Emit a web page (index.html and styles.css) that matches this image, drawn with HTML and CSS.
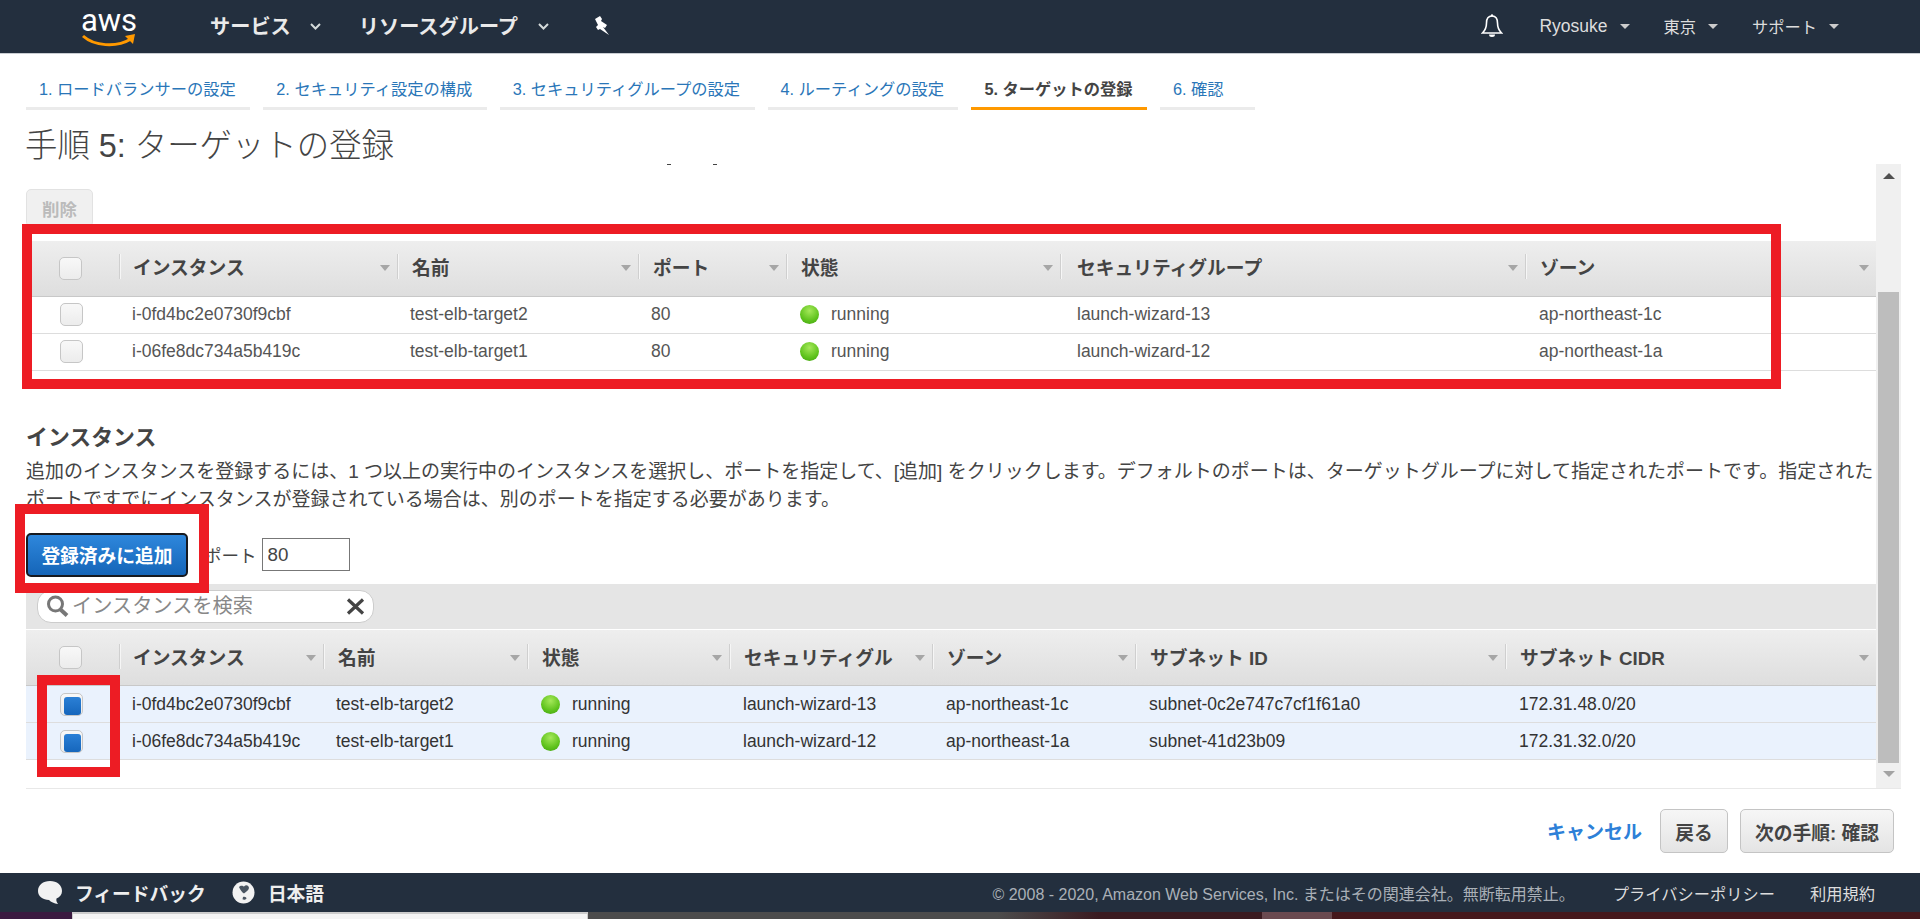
FILE: index.html
```html
<!DOCTYPE html>
<html lang="ja">
<head>
<meta charset="utf-8">
<title>手順 5: ターゲットの登録</title>
<link rel="stylesheet" href="styles.css">
</head>
<body>
<div class="page">
  <header class="topnav">
    <div class="logo">
      <span class="logo-text">aws</span>
      <svg class="logo-smile" width="54" height="14" viewBox="0 0 54 14"><path d="M1 3C12 13 34 15 49 6" fill="none" stroke="#f90" stroke-width="3"/><path d="M43 3L53 1L51 11Z" fill="#f90"/></svg>
    </div>
    <nav class="nav-left">
      <a class="nav-main nav-services">サービス</a>
      <svg class="chev" width="11" height="7" viewBox="0 0 11 7"><path d="M1 1L5.5 5.5L10 1" fill="none" stroke="#d5dbdb" stroke-width="2"/></svg>
      <a class="nav-main nav-groups">リソースグループ</a>
      <svg class="chev" width="11" height="7" viewBox="0 0 11 7"><path d="M1 1L5.5 5.5L10 1" fill="none" stroke="#d5dbdb" stroke-width="2"/></svg>
      <svg class="pin" width="18" height="20" viewBox="0 0 18 20"><path d="M2 3L7 0L9 3L8 5L14 9L12 12L10 11L16 19L7 13L5 14L3 11L5 9L2 3Z" fill="#fff"/></svg>
    </nav>
    <nav class="nav-right">
      <svg class="bell" width="22" height="24" viewBox="0 0 22 24"><path d="M11 2C7 2 5.500 5 5.500 9C5.500 13 4.500 16 1.500 19H20.500C17.500 16 16.500 13 16.500 9C16.500 5 15 2 11 2Z" fill="none" stroke="#fff" stroke-width="1.600"/><path d="M8 20.500A3 2.500 0 0 0 14 20.500Z" fill="#fff"/><circle cx="11" cy="1.500" r="1.200" fill="#fff"/></svg>
      <a class="nav-sub nav-user">Ryosuke</a><span class="caret caret-wide"></span>
      <a class="nav-sub nav-region">東京</a><span class="caret caret-wide"></span>
      <a class="nav-sub nav-support">サポート</a><span class="caret"></span>
    </nav>
  </header>

  <ul class="tabs">
    <li class="tab">1. ロードバランサーの設定</li>
    <li class="tab">2. セキュリティ設定の構成</li>
    <li class="tab">3. セキュリティグループの設定</li>
    <li class="tab">4. ルーティングの設定</li>
    <li class="tab tab-active">5. ターゲットの登録</li>
    <li class="tab tab-last">6. 確認</li>
  </ul>

  <h1 class="title">手順 5: ターゲットの登録</h1>

  <div class="scroller">
    <main class="content">
      <span class="clip-mark"></span>
      <button class="btn btn-disabled">削除</button>

      <table class="grid grid-a">
        <colgroup><col class="a0"><col class="a1"><col class="a2"><col class="a3"><col class="a4"><col class="a5"><col></colgroup>
        <thead>
          <tr>
            <th class="check-cell"><span class="box"></span></th>
            <th><div class="hc">インスタンス<i class="sort"></i></div></th>
            <th><div class="hc">名前<i class="sort"></i></div></th>
            <th><div class="hc">ポート<i class="sort"></i></div></th>
            <th><div class="hc">状態<i class="sort"></i></div></th>
            <th><div class="hc">セキュリティグループ<i class="sort"></i></div></th>
            <th><div class="hc">ゾーン<i class="sort"></i></div></th>
          </tr>
        </thead>
        <tbody>
          <tr>
            <td class="check-cell"><span class="box"></span></td>
            <td>i-0fd4bc2e0730f9cbf</td><td>test-elb-target2</td><td>80</td>
            <td><span class="status"><i class="dot"></i>running</span></td>
            <td>launch-wizard-13</td><td>ap-northeast-1c</td>
          </tr>
          <tr>
            <td class="check-cell"><span class="box"></span></td>
            <td>i-06fe8dc734a5b419c</td><td>test-elb-target1</td><td>80</td>
            <td><span class="status"><i class="dot"></i>running</span></td>
            <td>launch-wizard-12</td><td>ap-northeast-1a</td>
          </tr>
        </tbody>
      </table>

      <h2 class="section-title">インスタンス</h2>
      <p class="section-text">追加のインスタンスを登録するには、1 つ以上の実行中のインスタンスを選択し、ポートを指定して、[追加] をクリックします。デフォルトのポートは、ターゲットグループに対して指定されたポートです。指定された<br>ポートですでにインスタンスが登録されている場合は、別のポートを指定する必要があります。</p>

      <div class="add-row">
        <button class="btn-primary">登録済みに追加</button>
        <label class="port-label">ポート</label>
        <input class="port-input" type="text" value="80">
      </div>

      <div class="filter-bar">
        <div class="search">
          <svg class="search-icon" width="24" height="22" viewBox="0 0 24 22"><circle cx="9.500" cy="9" r="7" fill="none" stroke="#777" stroke-width="3"/><path d="M14.500 14.500L21 20.500" stroke="#777" stroke-width="4"/></svg>
          <span class="search-ph">インスタンスを検索</span>
          <svg class="search-x" width="19" height="17" viewBox="0 0 19 17"><path d="M2 1.500L17 15.500M17 1.500L2 15.500" stroke="#444" stroke-width="3.200"/></svg>
        </div>
      </div>

      <table class="grid grid-b">
        <colgroup><col class="b0"><col class="b1"><col class="b2"><col class="b3"><col class="b4"><col class="b5"><col class="b6"><col></colgroup>
        <thead>
          <tr>
            <th class="check-cell"><span class="box"></span></th>
            <th><div class="hc">インスタンス<i class="sort"></i></div></th>
            <th><div class="hc">名前<i class="sort"></i></div></th>
            <th><div class="hc">状態<i class="sort"></i></div></th>
            <th><div class="hc">セキュリティグル<i class="sort"></i></div></th>
            <th><div class="hc">ゾーン<i class="sort"></i></div></th>
            <th><div class="hc">サブネット ID<i class="sort"></i></div></th>
            <th><div class="hc">サブネット CIDR<i class="sort"></i></div></th>
          </tr>
        </thead>
        <tbody>
          <tr class="selected">
            <td class="check-cell"><span class="box box-on"></span></td>
            <td>i-0fd4bc2e0730f9cbf</td><td>test-elb-target2</td>
            <td><span class="status"><i class="dot"></i>running</span></td>
            <td>launch-wizard-13</td><td>ap-northeast-1c</td><td>subnet-0c2e747c7cf1f61a0</td><td>172.31.48.0/20</td>
          </tr>
          <tr class="selected">
            <td class="check-cell"><span class="box box-on"></span></td>
            <td>i-06fe8dc734a5b419c</td><td>test-elb-target1</td>
            <td><span class="status"><i class="dot"></i>running</span></td>
            <td>launch-wizard-12</td><td>ap-northeast-1a</td><td>subnet-41d23b09</td><td>172.31.32.0/20</td>
          </tr>
        </tbody>
      </table>
    </main>
    <div class="scrollbar">
      <span class="sb-up"></span>
      <span class="sb-thumb"></span>
      <span class="sb-down"></span>
    </div>
  </div>

  <div class="actions">
    <a class="cancel">キャンセル</a>
    <button class="btn btn-back">戻る</button>
    <button class="btn btn-next">次の手順: 確認</button>
  </div>

  <footer class="footer">
    <svg class="foot-icon" width="24" height="23" viewBox="0 0 24 23"><path d="M12 0C5 0 0 4 0 10C0 15.500 5 19 11 19C13 21 16 22.500 20 23C18.500 21 18 19.500 18.500 17.500C22 16 24 13.500 24 10C24 4 19 0 12 0Z" fill="#f2f2f2"/></svg>
    <span class="foot-strong foot-feedback">フィードバック</span>
    <svg class="foot-icon" width="23" height="23" viewBox="0 0 23 23"><circle cx="11.500" cy="11.500" r="11" fill="#f2f2f2"/><path d="M7 6C9 3.500 12 5.500 12 5.500C14 3.500 16.500 4 17 7C16.500 9.500 14 10.500 12 12.500C10 11.500 8.500 9 7 6ZM11 16C12.500 15.200 14.500 16 14.500 17.500C13.500 19 11.500 19 10.500 18.300Z" fill="#4a5561"/></svg>
    <span class="foot-strong foot-lang">日本語</span>
    <span class="foot-copy">© 2008 - 2020, Amazon Web Services, Inc. またはその関連会社。無断転用禁止。</span>
    <a class="foot-link foot-privacy">プライバシーポリシー</a>
    <a class="foot-link foot-terms">利用規約</a>
  </footer>

  <div class="desktop">
    <span class="d-purple"></span>
    <span class="d-window"></span>
    <span class="d-grey"></span>
    <span class="d-maroon"></span>
    <span class="d-pale"></span>
    <span class="d-red"></span>
  </div>

  <span class="mark mark-table"></span>
  <span class="mark mark-button"></span>
  <span class="mark mark-checks"></span>
</div>
</body>
</html>
```

FILE: styles.css
```css
* { box-sizing: border-box; }
html, body { margin: 0; padding: 0; }
body {
  background: #fff;
  color: #444;
  font-family: "Liberation Sans", "Noto Sans CJK JP", sans-serif;
  font-size: 17.5px;
}
.page {
  position: relative;
  width: 1920px;
  height: 919px;
  overflow: hidden;
  display: flex;
  flex-direction: column;
}

/* top nav */
.topnav {
  flex: none;
  height: 54px;
  background: #232f3e;
  border-bottom: 1px solid #c9cdd2;
  display: flex;
  align-items: center;
  padding-left: 82px;
  color: #fff;
}
.logo {
  width: 54px;
  height: 44px;
  display: flex;
  flex-direction: column;
  align-items: center;
}
.logo-text {
  font-family: Roboto, sans-serif;
  font-size: 31px;
  line-height: 36px;
  height: 36px;
  margin-top: -2px;
  color: #fff;
}
.logo-smile { margin-top: -6px; }
.nav-left { display: flex; align-items: center; margin-left: 74px; }
.nav-main { font-size: 20.200px; font-weight: 700; color: #eaeaea; margin-top: -3px; }
.chev { margin-left: 19px; margin-right: 38px; flex: none; }
.nav-groups + .chev { margin-left: 20px; margin-right: 44px; }
.pin { flex: none; margin-top: -2px; }
.nav-right { margin-left: auto; display: flex; align-items: center; padding-right: 81px; }
.bell { margin-right: 36px; margin-top: -2px; }
.nav-sub { font-size: 16.250px; color: #ddd; margin-top: -1px; }
.nav-user { font-size: 17.500px; }
.caret {
  width: 0; height: 0;
  margin-left: 12px;
  border-left: 5px solid transparent;
  border-right: 5px solid transparent;
  border-top: 5px solid #ccc;
}
.caret-wide { margin-right: 34px; }

/* tabs */
.tabs {
  flex: none;
  list-style: none;
  margin: 18px 0 0;
  padding: 0 0 0 26px;
  display: flex;
  gap: 13px;
}
.tab {
  height: 38px;
  padding: 0 14.500px 0 13px;
  line-height: 34px;
  font-size: 16.250px;
  color: #2a76b8;
  border-bottom: 3px solid #ebebeb;
  white-space: nowrap;
}
.tab-active { color: #444; font-weight: 700; border-bottom-color: #f90; }
.tab-last { width: 95px; }

.title {
  flex: none;
  height: 54px;
  margin: 0;
  padding-left: 25px;
  font-size: 32.400px;
  line-height: 72px;
  font-weight: 300;
  color: #444;
}

/* scroll region */
.scroller {
  flex: none;
  height: 625px;
  margin-left: 26px;
  width: 1875px;
  display: flex;
  border-bottom: 1px solid #e8e8e8;
  overflow: hidden;
}
.content { position: relative; width: 1850px; flex: none; }
.clip-mark {
  position: absolute;
  left: 641px;
  top: 0;
  width: 4px;
  height: 1px;
  background: #444;
}
.clip-mark::after {
  content: "";
  position: absolute;
  left: 46px;
  top: 0;
  width: 4px;
  height: 1px;
  background: #444;
}
.scrollbar {
  flex: 1;
  background: #f0f0f0;
  display: flex;
  flex-direction: column;
  align-items: center;
  padding-top: 9px;
}
.sb-up {
  width: 0; height: 0;
  border-left: 6px solid transparent;
  border-right: 6px solid transparent;
  border-bottom: 6px solid #505050;
}
.sb-thumb { width: 21px; height: 471px; margin-top: 113px; background: #bdbdbd; }
.sb-down {
  width: 0; height: 0;
  margin-top: 8px;
  border-left: 6px solid transparent;
  border-right: 6px solid transparent;
  border-top: 6px solid #a3a3a3;
}

.btn {
  font: inherit;
  font-weight: 700;
  color: #444;
  background: linear-gradient(#f6f6f6, #e4e4e4);
  border: 1px solid #c4c4c4;
  border-radius: 5px;
  padding: 0;
}
.btn-disabled {
  display: block;
  margin: 25px 0 0;
  width: 67px;
  height: 38px;
  color: #bbb;
  background: #f0f0f0;
  border-color: #e2e2e2;
  font-size: 17.500px;
}

/* tables */
.grid {
  width: 100%;
  table-layout: fixed;
  border-collapse: collapse;
}
.grid-a { margin-top: 14px; }
.a0, .b0 { width: 93px; }
.a1 { width: 278px; }
.a2 { width: 241px; }
.a3 { width: 148px; }
.a4 { width: 274px; }
.a5 { width: 465px; }
.b1 { width: 204px; }
.b2 { width: 204px; }
.b3 { width: 202px; }
.b4 { width: 203px; }
.b5 { width: 203px; }
.b6 { width: 370px; }
.grid th {
  height: 55px;
  padding: 0;
  background: linear-gradient(#eeeeee, #dedede);
  border-bottom: 1px solid #c8c8c8;
  text-align: left;
  font-size: 18.750px;
  font-weight: 700;
  color: #444;
}
.grid-b th { height: 56px; }
.hc {
  height: 25px;
  margin-top: -2px;
  display: flex;
  align-items: center;
  justify-content: space-between;
  border-left: 1px solid #cfcfcf;
  box-shadow: inset 1px 0 0 #f6f6f6;
  padding: 0 7px 0 14px;
  white-space: nowrap;
}
.grid-a .hc { margin-top: -3px; }
.grid th:nth-child(2) .hc { padding-left: 13px; }
.grid-a th:nth-child(6) .hc { padding-left: 16px; }
.sort {
  flex: none;
  width: 0; height: 0;
  margin-top: 3px;
  border-left: 5px solid transparent;
  border-right: 5px solid transparent;
  border-top: 6px solid #a6a6a6;
}
.grid td {
  height: 37px;
  padding: 0 0 0 13px;
  border-bottom: 1px solid #ddd;
  font-size: 17.500px;
  color: #555;
  white-space: nowrap;
}
.grid-a td:nth-child(6) { padding-left: 17px; }
.grid-a td:nth-child(7),
.grid-b td:nth-child(n+5) { padding-left: 14px; }
.grid .check-cell { padding: 0 0 0 33px; }
.box {
  display: block;
  width: 23px;
  height: 23px;
  background: linear-gradient(#f8f8f8, #ececec);
  border: 1px solid #c6c6c6;
  border-radius: 5px;
  position: relative;
}
.grid td .box { margin-left: 1px; }
.box-on::after {
  content: "";
  position: absolute;
  left: 3px;
  top: 3px;
  width: 17px;
  height: 18px;
  border-radius: 3px;
  background: linear-gradient(#2b80d6, #1666bc);
}
.selected td { background: #eaf2fd; color: #333; }
.status { display: flex; align-items: center; gap: 12px; }
.dot {
  width: 19px;
  height: 19px;
  margin-left: 1px;
  flex: none;
  border-radius: 50%;
  background: radial-gradient(circle at 50% 30%, #a5e85a, #5fc31d 60%, #3f9f10);
}

/* instances section */
.section-title {
  margin: 53px 0 0;
  font-size: 21.900px;
  line-height: 28px;
  font-weight: 700;
  color: #444;
}
.section-text {
  margin: 6px 0 0;
  font-size: 19px;
  line-height: 28px;
  color: #444;
  white-space: nowrap;
}
.add-row {
  margin-top: 19px;
  height: 44px;
  display: flex;
  align-items: center;
}
.btn-primary {
  width: 162px;
  height: 44px;
  font: inherit;
  font-size: 18.750px;
  font-weight: 700;
  color: #fff;
  background: linear-gradient(#2e87dc, #1565b8);
  border: 2px solid #16191f;
  border-radius: 5px;
  padding: 0;
}
.port-label { margin-left: 16px; font-size: 17.500px; color: #444; }
.port-input {
  width: 88px;
  height: 33px;
  margin-left: 5px;
  padding: 0 5px;
  font: inherit;
  font-size: 18.750px;
  color: #444;
  background: #fff;
  border: 1px solid #777;
  border-radius: 0;
}
.filter-bar {
  margin-top: 7px;
  height: 46px;
  background: #e5e5e5;
  border-bottom: 1px solid #fff;
  padding: 6px 0 0 11px;
}
.search {
  width: 337px;
  height: 33px;
  background: #fff;
  border: 1px solid #ccc;
  border-radius: 14px;
  display: flex;
  align-items: center;
  padding: 0 8px;
}
.search-icon { flex: none; }
.search-ph { margin-left: 2px; font-size: 20.200px; color: #888; margin-top: -3px; }
.search-x { flex: none; margin-left: auto; }

/* bottom actions */
.actions {
  flex: none;
  height: 85px;
  display: flex;
  align-items: center;
  justify-content: flex-end;
  padding-right: 26px;
  margin-top: -1px;
}
.cancel { font-size: 19px; font-weight: 700; color: #2d80d8; margin-right: 18px; }
.btn-back, .btn-next { height: 44px; font-size: 18.750px; margin-top: 1px; }
.btn-back { width: 68px; margin-right: 12px; }
.btn-next { width: 154px; }

/* footer */
.footer {
  flex: none;
  height: 39px;
  background: #232f3e;
  display: flex;
  align-items: center;
  padding-left: 38px;
  color: #ccc;
}
.foot-icon { flex: none; }
.foot-strong { font-size: 18.750px; font-weight: 700; color: #eee; }
.foot-feedback { margin-left: 13px; margin-right: 26px; }
.foot-lang { margin-left: 13px; }
.foot-copy { margin-left: auto; font-size: 16px; color: #aab0b7; }
.foot-link { font-size: 16.250px; color: #ddd; }
.foot-privacy { margin-left: 38px; }
.foot-terms { margin-left: 35px; margin-right: 45px; }

/* desktop strip under the window */
.desktop { flex: 1; display: flex; background: #45181c; }
.d-purple { width: 72px; background: #3a1a40; }
.d-window { width: 516px; background: #f4f4f4; border-top: 2px solid #ccc; border-left: 1px solid #ccc; border-right: 1px solid #ccc; }
.d-grey { width: 512px; background: linear-gradient(90deg, #4c4c4c 80%, #3a1a20); }
.d-maroon { width: 162px; background: #3a1a20; }
.d-pale { width: 70px; background: #6a4a50; }
.d-red { flex: 1; background: #45181c; }

/* red annotation boxes */
.mark { position: absolute; border: 10px solid #ed1c24; }
.mark-table { left: 22px; top: 224px; width: 1759px; height: 165px; }
.mark-button { left: 15px; top: 504px; width: 194px; height: 89px; }
.mark-checks { left: 37px; top: 675px; width: 83px; height: 102px; }
```
